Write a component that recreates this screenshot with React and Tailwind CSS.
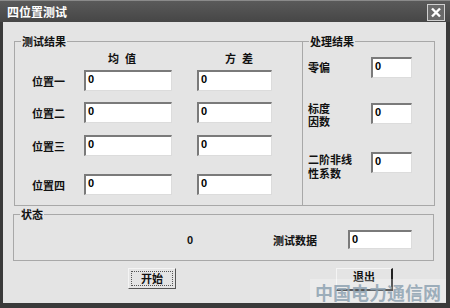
import { useState } from 'react';

const cjk = "font-['Noto_Sans_CJK_SC','Noto_Sans',sans-serif] font-bold";

function Field({ className = '', value = '0' }) {
  return (
    <div
      className={`bg-white border-t-2 border-l-2 border-t-[#7a7a7a] border-l-[#7a7a7a] border-b border-r border-b-[#dcdcdc] border-r-[#dcdcdc] pl-[2px] text-[11px] leading-[14px] text-black font-['Liberation_Sans',sans-serif] font-bold ${className}`}
    >
      {value}
    </div>
  );
}

function Group({ label, className = '', children }) {
  return (
    <div className={`relative border border-[#a8a8a8] ${className}`}>
      <span className={`absolute -top-[8px] left-[6px] bg-[#e4e4e4] px-[1px] text-[11px] leading-[14px] text-[#111] ${cjk}`}>
        {label}
      </span>
      {children}
    </div>
  );
}

export default function App() {
  const [rows] = useState([
    { name: '位置一', mt: 'mt-[5px]' },
    { name: '位置二', mt: 'mt-[11px]' },
    { name: '位置三', mt: 'mt-[12px]' },
    { name: '位置四', mt: 'mt-[18px]' },
  ]);

  return (
    <div className="w-[450px] h-[308px] bg-[#3a3a3a] flex flex-col overflow-hidden">
      {/* Title bar */}
      <div className="h-[22px] shrink-0 bg-gradient-to-b from-[#5a5a5a] to-[#464646] border-t border-[#8a8a8a] flex items-center justify-between pl-[7px] pr-[5px]">
        <span className={`text-white text-[12px] leading-none ${cjk}`}>四位置测试</span>
        <div className="w-[18px] h-[17px] mt-[2px] border border-[#d0d0d0] bg-[#6a6a6a] flex items-center justify-center">
          <svg width="12" height="11" viewBox="0 0 12 11">
            <path d="M2 1.5 L10 9.5 M10 1.5 L2 9.5" stroke="#ffffff" strokeWidth="2.4" />
          </svg>
        </div>
      </div>

      {/* Body */}
      <div className="relative ml-[3px] mr-[4px] h-[281px] bg-[#e4e4e4] pt-[19px] pl-[11px]">
        <div className="flex h-[165px]">
          <Group label="测试结果" className="w-[289px] h-full">
            <div className={`flex mt-[9px] text-[11px] leading-[14px] text-[#111] ${cjk}`}>
              <span className="ml-[93px] tracking-[6px]">均值</span>
              <span className="ml-[83px] tracking-[6px]">方差</span>
            </div>
            <div className="flex flex-col pl-[17px]">
              {rows.map((r) => (
                <div key={r.name} className={`flex items-center ${r.mt}`}>
                  <span className={`w-[52px] text-[11px] leading-[14px] text-[#111] ${cjk}`}>{r.name}</span>
                  <Field className="w-[88px] h-[21px]" />
                  <Field className="ml-[25px] w-[75px] h-[21px]" />
                </div>
              ))}
            </div>
          </Group>
          <Group label="处理结果" className="w-[132px] h-full border-l-0">
            <div className="flex flex-col pl-[5px] pt-[15px]">
              <div className="flex items-center">
                <span className={`w-[63px] text-[11px] leading-[13px] text-[#111] ${cjk}`}>零偏</span>
                <Field className="w-[41px] h-[21px]" />
              </div>
              <div className="flex items-start mt-[25px]">
                <span className={`w-[63px] -mt-[1px] text-[11px] leading-[13px] text-[#111] ${cjk}`}>标度<br />因数</span>
                <Field className="w-[41px] h-[21px]" />
              </div>
              <div className="flex items-start mt-[24px]">
                <span className={`w-[63px] text-[11px] leading-[14px] text-[#111] ${cjk}`}>二阶非线<br />性系数</span>
                <Field className="w-[41px] h-[21px]" />
              </div>
            </div>
          </Group>
        </div>

        <Group label="状态" className="w-[421px] h-[47px] mt-[8px] -ml-[1px]">
          <div className="flex items-center mt-[16px]">
            <span className="ml-[173px] w-[86px] text-[11px] font-bold font-['Liberation_Sans',sans-serif] text-[#111]">0</span>
            <span className={`w-[75px] text-[11px] leading-[14px] text-[#111] ${cjk}`}>测试数据</span>
            <Field className="w-[64px] h-[19px] -mt-[1px]" />
          </div>
        </Group>

        <div className="flex mt-[7px]">
          <button className={`ml-[114px] w-[48px] h-[21px] bg-[#e4e4e4] border border-t-[#f4f4f4] border-l-[#f4f4f4] border-b-[#555] border-r-[#555] p-[2px] text-[11px] text-[#111] ${cjk}`}>
            <div className="w-full h-full border border-dotted border-[#555] flex items-center justify-center leading-none">开始</div>
          </button>
          <button className={`ml-[160px] w-[57px] h-[23px] bg-[#e4e4e4] border border-t-[#f4f4f4] border-l-[#f4f4f4] border-b-2 border-r-2 border-b-[#222] border-r-[#222] pb-[6px] text-[11px] leading-none text-[#111] ${cjk}`}>
            退出
          </button>
        </div>

        {/* watermark */}
        <div className="absolute left-[307px] top-[257px] w-[136px] h-[23px] bg-white/25 flex items-center justify-center pt-[2px]">
          <span className={`text-[18px] leading-none tracking-[0px] text-[#8ea2b2]/85 ${cjk}`}>中国电力通信网</span>
        </div>
      </div>
    </div>
  );
}
